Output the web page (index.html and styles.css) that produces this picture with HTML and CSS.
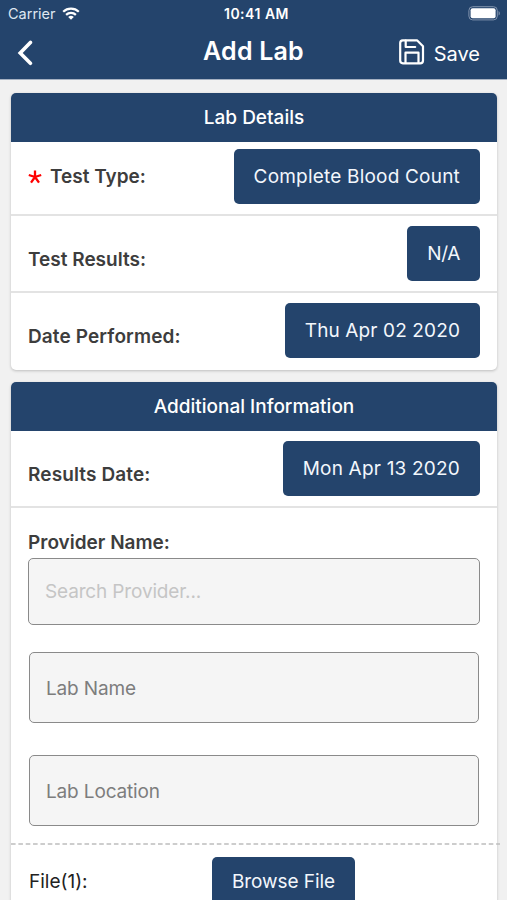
FILE: index.html
```html
<!DOCTYPE html>
<html lang="en">
<head>
<meta charset="utf-8">
<title>Add Lab</title>
<link rel="stylesheet" href="styles.css">
</head>
<body>
<div class="screen">
  <header class="topbar">
    <div class="status">
      <div class="carrier"><span>Carrier</span>
        <svg class="wifi" viewBox="0 0 18 13" width="18" height="13"><g fill="none" stroke="#fff" stroke-width="2.2"><path d="M1.2 4.8a11.2 11.2 0 0 1 15.6 0"/><path d="M4.1 7.9a7 7 0 0 1 9.8 0"/></g><path d="M6.2 10a4 4 0 0 1 5.6 0L9 12.8z" fill="#fff"/></svg>
      </div>
      <div class="clock">10:41 AM</div>
      <svg class="battery" viewBox="0 0 33 15" width="33" height="15"><rect x=".9" y=".7" width="28.4" height="13.2" rx="3.8" fill="none" stroke="#8093ad" stroke-width="1"/><rect x="2.6" y="2.3" width="25" height="10" rx="2" fill="#fff"/><path d="M30.6 5v4.6c1.7-.8 1.7-3.8 0-4.6z" fill="#8093ad"/></svg>
    </div>
    <div class="nav">
      <svg class="back" viewBox="0 0 18 26" width="18" height="26"><path d="M14.4 2.4 4.2 12.9l10.200 10.400" fill="none" stroke="#fff" stroke-width="3.600" stroke-linecap="round"/></svg>
      <h1 class="title">Add Lab</h1>
      <div class="save">
        <svg viewBox="0 0 26 26" width="26" height="26"><g fill="none" stroke="#fff" stroke-width="2.200" stroke-linejoin="round" stroke-linecap="round"><path d="M3.800 1.300h14.200l6 6v14.200a2.800 2.800 0 0 1-2.800 2.800H3.900A2.800 2.800 0 0 1 1.200 21.500V4.100a2.800 2.800 0 0 1 2.600-2.800z"/><path d="M6.700 1.500v6.500h9.500M6.500 24v-10.300h13V24"/></g></svg>
        <span>Save</span>
      </div>
    </div>
  </header>
  <main class="content">
    <section class="card">
      <h2 class="card-head">Lab Details</h2>
      <div class="row first">
        <div class="label required"><svg viewBox="0 0 14 14" width="14" height="14"><path d="M7 7V.5M7 7 .8 5M7 7l6.200-2M7 7l-4 5.600M7 7l4 5.600" stroke="red" stroke-width="2.300"/></svg><span>Test Type:</span></div>
        <div class="btn"><span class="wide">Complete Blood Count</span></div>
      </div>
      <div class="row"><div class="label low"><span>Test Results:</span></div><div class="btn"><span class="tight">N/A</span></div></div>
      <div class="row last"><div class="label low"><span class="loose">Date Performed:</span></div><div class="btn"><span class="loose">Thu Apr 02 2020</span></div></div>
    </section>
    <section class="card tall">
      <h2 class="card-head">Additional Information</h2>
      <div class="row"><div class="label low"><span class="loose">Results Date:</span></div><div class="btn"><span class="wide">Mon Apr 13 2020</span></div></div>
      <div class="fields">
        <div class="label provider"><span>Provider Name:</span></div>
        <div class="field search">Search Provider...</div>
        <div class="field">Lab Name</div>
        <div class="field">Lab Location</div>
      </div>
      <svg class="dashes" width="489" height="2" viewBox="0 0 489 2"><path d="M0 1h489" stroke="#bdbdbd" stroke-width="1.400" stroke-dasharray="4.600 2.750"/></svg>
      <div class="file"><span class="file-label">File(1):</span><div class="btn browse"><span>Browse File</span></div></div>
    </section>
  </main>
</div>
</body>
</html>
```
FILE: styles.css
```css
* { box-sizing: border-box; }
html, body { margin: 0; height: 900px; overflow: hidden; }
body { font-family: Inter, "Liberation Sans", sans-serif; font-size: 19px; background: #f1f1f1; color: #3d3d3d; }
h1, h2 { margin: 0; }
svg { display: block; flex: none; }
span { white-space: nowrap; }
.screen { height: 900px; overflow: hidden; }
.topbar { height: 80px; background: #24446c; color: #fff; border-bottom: 1px solid #a5b1c2; }
.status { display: grid; grid-template-columns: 1fr auto 1fr; align-items: center; height: 27px; padding: 0 6px 0 8px; font-size: 14.500px; }
.carrier { display: flex; align-items: center; gap: 7px; color: #dfe7f1; }
.wifi { margin: -1px 0 0 -1px; }
.clock { font-weight: 600; font-size: 14px; letter-spacing: .5px; padding-left: 4px; }
.battery { justify-self: end; }
.nav { display: grid; grid-template-columns: 1fr auto 1fr; height: 52px; padding: 0 27px; }
.back { margin: 13px 0 0 -11px; }
.title { font-size: 25px; line-height: 30px; font-weight: 600; padding-top: 9px; letter-spacing: .2px; }
.save { display: flex; justify-content: flex-end; gap: 9px; padding-top: 12px; font-size: 20px; line-height: 30px; }
.content { padding: 13px 10px 0 11px; }
.card { height: 277px; border-radius: 5px; background: #fff; box-shadow: 0 1px 3px rgba(0,0,0,.22); margin-bottom: 12px; }
.tall { height: 560px; }
.card-head { height: 49px; border-radius: 5px 5px 0 0; background: #24446c; color: #fff; font-size: 19px; line-height: 50px; font-weight: 500; text-align: center; }
.row { display: flex; justify-content: space-between; height: 77px; padding: 10px 17px 0; border-bottom: 2px solid #e3e3e3; }
.first { height: 74px; padding-top: 7px; }
.last { border-bottom: 0; }
.label { font-weight: 600; font-size: 19px; line-height: 24px; height: 24px; }
.low { margin-top: 22px; }
.required { display: flex; align-items: center; gap: 8px; margin-top: 16px; }
.btn { height: 55px; background: #24446c; color: #f3f7fc; border-radius: 5px; padding: 0 20px; font-size: 19px; line-height: 56px; }
.wide { letter-spacing: .2px; }
.loose { letter-spacing: .12px; }
.tight { letter-spacing: -.35px; }
.fields { padding: 23px 17px 0; height: 335px; }
.field { height: 71px; margin: 0 1px 32px; border: 1.500px solid #8a8a8a; border-radius: 5px; background: #f5f5f5; color: #7d7d7d; font-size: 19px; line-height: 71px; padding-left: 16px; letter-spacing: -.15px; }
.search { height: 67px; margin: 3px 0 27px; line-height: 65px; color: #c5c5c5; }
.file { display: flex; padding: 12px 17px; color: #222; }
.file-label { width: 184px; line-height: 50px; padding-left: 1px; }
.browse { line-height: 49px; letter-spacing: -.08px; }
```
